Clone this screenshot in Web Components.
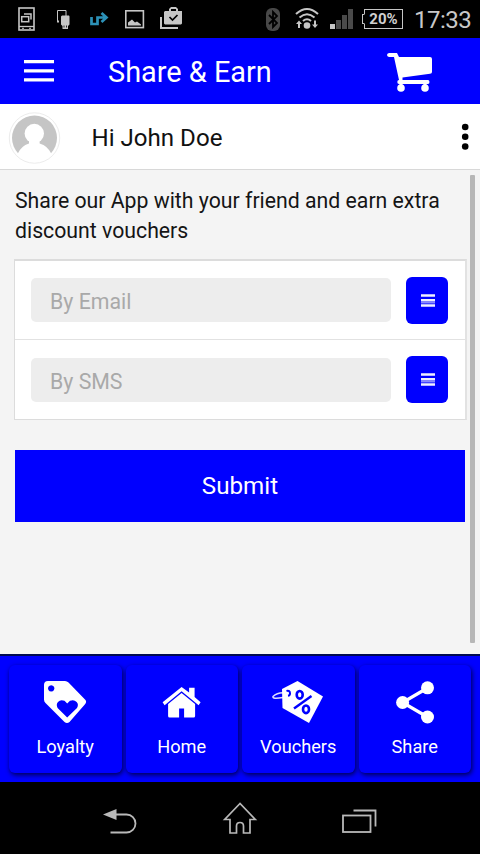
<!DOCTYPE html>
<html lang="en">
<head>
<meta charset="utf-8">
<title>Share &amp; Earn</title>
<style>
html,body{margin:0;padding:0;height:100%;overflow:hidden;background:#000}
body{font-family:Roboto,"Liberation Sans",sans-serif}
</style>
</head>
<body>
<share-app></share-app>
<script>
const define = (tag, html) => customElements.define(tag, class extends HTMLElement {
  constructor() {
    super();
    const t = document.createElement('template');
    t.innerHTML = html;
    this.attachShadow({ mode: 'open' }).append(t.content.cloneNode(true));
  }
});

// Each icon: [width, height, svg content]
const ICONS = {
  cast: [18, 24, '<g fill="none" stroke="#c6c6c6"><rect x="1" y="1" width="15" height="22" stroke-width="1.6"/><path d="M1 19.500h15" stroke-width="1.300"/><path d="M4 21.300h2M11 21.300h2"/><rect x="3.700" y="9.700" width="7" height="5" stroke-width="1.500"/><path d="M6 7h7v5.500" stroke-width="1.500"/></g>'],
  usb: [13, 20, '<path d="M.5 12V.5H9V6" fill="none" stroke="#c6c6c6" stroke-width="1"/><path d="M0 10.500h2v2H0zM5 5.500h7l.5 1v8l-1.500 1.500v3H5.500v-3L4 14.500v-8z" fill="#c6c6c6"/><path d="M7 15.500v2M9.500 15.500v2" stroke="#000" stroke-width=".8"/>'],
  route: [19, 15, '<path d="M1.500 5v7h6V5.500h9M11.500 1l5 4.500-5 4.500" fill="none" stroke="#2c91b7" stroke-width="2.700"/>'],
  image: [20, 19, '<rect x=".8" y=".8" width="17.600" height="16.800" fill="none" stroke="#c6c6c6" stroke-width="1.600"/><path d="M3 15.500v-3l4-3 3 3 2-1 4 3v1z" fill="#c6c6c6"/>'],
  work: [23, 23, '<path d="M1 10v11h17" fill="none" stroke="#c6c6c6" stroke-width="2"/><path fill="#c6c6c6" fill-rule="evenodd" d="M5 4h4V2l2-2h5l2 2v2h4v12.500l-1 1H5l-1-1V5zM11 2v2h5V2z"/><path d="M9.500 10l3 3 5-5" fill="none" stroke="#000" stroke-width="1.700"/>'],
  bluetooth: [14, 23, '<rect width="14" height="23" rx="6" fill="#484848"/><path d="M3 7l8 8-4 4V4l4 4-8 8" fill="none" stroke="#000" stroke-width="1.800"/>'],
  wifi: [24, 22, '<g fill="none" stroke="#c6c6c6" stroke-width="2"><path d="M1 6q11-10 22 0M4.500 9.500q7.500-6.500 15 0M8 13q4-3.500 8 0"/></g><circle cx="12" cy="17.500" r="3.300" fill="#c6c6c6"/><path fill="#c6c6c6" d="M4 12.500l3 3.500H5v4H3v-4H1zM20 20l3-3.500h-2v-4h-2v4h-2z"/>'],
  signal: [24, 21, '<path fill="#c6c6c6" d="M0 15h5v5H0z"/><path fill="#4a4a4a" d="M6 11h5v9H6zM12 6h5v14h-5zM18 0h5v20h-5z"/>'],
  menu: [30, 22, '<path d="M0 1.700h30M0 10.800h30M0 19.900h30" stroke="#fff" stroke-width="3.200"/>'],
  cart: [46, 40, '<g fill="#fff"><path d="M2 0h8l2 4h31q2 0 2 2v13q0 1.500-2 1.800L15.500 24.500V27H41q1.500 0 1.500 2T41 31H12q-1.700 0-1.700-2t1.700-2L7 4H2Q0 3.700 0 2t2-2z"/><circle cx="14" cy="35" r="3.800"/><circle cx="38" cy="35" r="3.800"/><path d="M12.500 29h3v4h-3zM36.500 29h3v4h-3z"/></g>'],
  avatar: [52, 52, '<circle cx="26.500" cy="26" r="25.200" fill="#fff" stroke="#ececec"/><circle cx="26.500" cy="26" r="22.500" fill="#c5c5c5"/><clipPath id="c"><circle cx="26.500" cy="26" r="24.200"/></clipPath><g clip-path="url(#c)" fill="#fff"><circle cx="26.300" cy="21.500" r="9.700"/><rect x="21" y="27" width="10.600" height="8"/><path d="M6.500 52L9.500 42Q13 34 21 31.500h10.600Q40 34 43.500 42l3 10z"/></g>'],
  dots: [8, 28, '<circle cx="4.200" cy="4" r="3.300"/><circle cx="4.200" cy="13.800" r="3.300"/><circle cx="4.200" cy="23.500" r="3.300"/>'],
  bars: [14, 13, '<path d="M0 8.400h14" stroke="#88f" stroke-width="2.200"/><path d="M0 1.500h14M0 6.200h14M0 11.500h14" stroke="#f0f0ff" stroke-width="2.300"/>'],
  loyalty: [42, 43, '<path fill="#fff" fill-rule="evenodd" d="M4 0h17q2 0 3.500 1.500L41 18.500q2.200 2.200 0 4.700L25.500 41q-2.500 2.200-5 0L1.500 22Q0 20.500 0 18.500V4Q0 0 4 0zM7.200 4.200a3.200 3.200 0 1 0 .01 0zM23.200 36.500L33 27Q35 23.500 32.600 21 30 18 26 19.800L23.200 22.500 20.500 19.800Q16.500 18 14 21 11.800 23.500 13.600 27z"/>'],
  home: [38, 31, '<g fill="#fff" transform="translate(-.4 0)"><path d="M19 0l7.500 5.500V.8H32V10l6 5.300-2 3L19 4.300 2 18.300l-2-3z"/><path d="M19 6l13.500 11v12q0 1.500-1.500 1.500h-9.500v-9h-5v9H7q-1.500 0-1.500-1.500V17z"/></g>'],
  voucher: [52, 43, '<path d="M12 11.800Q5 11.500 1 15.500q-1 3 10 1" fill="none" stroke="#dcdcff" stroke-width="1.500"/><path fill="#fff" d="M10 8L25.500 0 51 15.500 37 42 10.500 27z"/><path d="M14.500 10q3.500-1 3.500 2.500 0 2-2 2.300" fill="none" stroke="#00f" stroke-width="2"/><g fill="none" stroke="#00f"><ellipse cx="27.700" cy="13.800" rx="3" ry="3.800" stroke-width="2.600"/><ellipse cx="34" cy="28.300" rx="3" ry="3.800" stroke-width="2.600"/><path d="M39.500 15L22 27.500" stroke-width="2.400"/></g>'],
  share: [38, 43, '<path d="M31.500 7L6.500 21.500l25 14.500" fill="none" stroke="#fff" stroke-width="3.200"/><g fill="#fff"><circle cx="31.500" cy="6.800" r="6.500"/><circle cx="6.600" cy="21.500" r="6.500"/><circle cx="31.500" cy="36" r="6.500"/></g>'],
  back: [35, 26, '<path fill="#b9b9b9" d="M0 6.500L13.500 1v11z"/><path d="M12 6.500h11.500a9 9 0 0 1 0 18H7.500" fill="none" stroke="#b9b9b9" stroke-width="1.800"/>'],
  sysHome: [34, 33, '<path d="M17 2.500L1.700 18.500H7V32h6.500v-7q0-3.500 3.500-3.500t3.500 3.500v7H27V18.500h5.300z" fill="none" stroke="#b9b9b9" stroke-width="1.700"/>'],
  recent: [35, 25, '<g fill="none" stroke="#b9b9b9" stroke-width="1.800"><rect x="1" y="7.500" width="27.500" height="16.500"/><path d="M11.500 2.500h22V18.500"/></g>']
};
customElements.define('ui-icon', class extends HTMLElement {
  connectedCallback() {
    if (this.shadowRoot) return;
    const [w, h, body] = ICONS[this.getAttribute('name')];
    this.attachShadow({ mode: 'open' }).innerHTML =
      `<style>:host{display:block;flex:none;width:${w}px;height:${h}px}svg{display:block;overflow:visible}</style>
       <svg width="${w}" height="${h}" viewBox="0 0 ${w} ${h}">${body}</svg>`;
  }
});

define('battery-level', `<style>
:host{display:block;flex:none;width:41px;height:20px}
div{box-sizing:border-box;height:20px;margin-left:2px;border:1px solid #c6c6c6;color:#d0d0d0;font:bold 15px/19px Roboto,sans-serif;text-align:center;position:relative}
i{position:absolute;left:-3px;top:4px;width:3px;height:10px;box-sizing:border-box;border:1px solid #c6c6c6;border-right:1px solid #000}
</style><div><i></i><slot></slot></div>`);

define('status-bar', `<style>
:host{display:flex;justify-content:space-between;height:38px;background:#000;padding:0 8px 0 18px;box-sizing:border-box}
div{display:flex;align-items:flex-start}
.l ui-icon:nth-child(1){margin:7px 21px 0 0}.l ui-icon:nth-child(2){margin:10px 20px 0 0}.l ui-icon:nth-child(3){margin:12px 16px 0 0}.l ui-icon:nth-child(4){margin:10px 15px 0 0}.l ui-icon:nth-child(5){margin-top:7px}
.r{gap:11px}.r>*{margin-top:9px}.r ui-icon:first-child{margin:8px 4px 0 0}.r ui-icon:nth-child(2){margin-top:8px}
.r battery-level{margin-left:-3px}
span{font-size:24px;line-height:24px;color:#c8c8c8;margin:8px 0 0!important;width:58px;letter-spacing:-.5px;white-space:nowrap}
</style><div class="l"><ui-icon name="cast"></ui-icon><ui-icon name="usb"></ui-icon><ui-icon name="route"></ui-icon><ui-icon name="image"></ui-icon><ui-icon name="work"></ui-icon></div>
<div class="r"><ui-icon name="bluetooth"></ui-icon><ui-icon name="wifi"></ui-icon><ui-icon name="signal"></ui-icon><battery-level>20%</battery-level><span>17:33</span></div>`);

define('app-header', `<style>
:host{display:flex;align-items:flex-start;height:66px;background:#00f;color:#fff;padding:0 47px 0 24px;box-sizing:border-box}
ui-icon{margin-top:22px}h1{flex:1;font-weight:400;font-size:28.9px;line-height:34px;margin:17px 0 0 54px}
ui-icon:last-child{margin-top:14.500px}
</style><ui-icon name="menu"></ui-icon><h1><slot></slot></h1><ui-icon name="cart"></ui-icon>`);

define('user-bar', `<style>
:host{display:flex;align-items:flex-start;height:66px;background:#fff;border-bottom:1px solid #d8d8d8;box-sizing:border-box;padding:0 11px 0 8px;color:#111}
ui-icon{margin-top:8.400px}span{flex:1;font-size:24.1px;line-height:30px;margin:19px 0 0 31.500px}
ui-icon:last-child{margin-top:18.500px}
</style><ui-icon name="avatar"></ui-icon><span><slot></slot></span><ui-icon name="dots"></ui-icon>`);

define('contact-row', `<style>
:host{display:flex;align-items:center;height:79px;padding:0 17px 0 16px;box-sizing:border-box;gap:15px}
.f{flex:1;height:44px;border-radius:5px;background:#ededed;color:#a9a9a9;font-size:21.3px;line-height:47px;padding-left:19px;box-sizing:border-box}
.b{width:42px;height:47px;border-radius:6px;background:#00f;display:grid;place-items:center;padding-left:1px;box-sizing:border-box}
</style><div class="f"><slot></slot></div><div class="b"><ui-icon name="bars"></ui-icon></div>`);

define('contact-card', `<style>
:host{display:block;width:453px;height:161px;box-sizing:border-box;background:#fff;border:1px solid #dcdcdc;border-top-width:2px;border-right:2px solid #e2e2e2}
::slotted(contact-row:first-child){border-bottom:1px solid #e2e2e2}
</style><slot></slot>`);

define('submit-button', `<style>
:host{display:block;width:450px;height:71.500px;background:#00f;color:#fff;font-size:24.2px;line-height:73px;text-align:center}
</style><slot></slot>`);

define('app-content', `<style>
:host{display:flex;justify-content:space-between;height:484px;background:#f4f4f4;padding:0 5px 0 14px;box-sizing:border-box}
p{margin:16px 0 13px 1px;font-size:21.25px;line-height:30px;color:#151515;white-space:nowrap}
contact-card{margin-bottom:30.300px}submit-button{margin-left:1px}
.s{width:5px;height:468px;margin-top:5px;background:#b7b7b7;border-radius:1px}
</style><div><p>Share our App with your friend and earn extra<br>discount vouchers</p>
<contact-card><contact-row>By Email</contact-row><contact-row>By SMS</contact-row></contact-card>
<submit-button>Submit</submit-button></div><div class="s"></div>`);

define('nav-tile', `<style>
:host{display:flex;flex-direction:column;align-items:center;justify-content:space-between;height:108px;box-sizing:border-box;padding:15px 0 15px;background:#00f;border-radius:6px;box-shadow:1px 2px 5px rgba(0,0,45,.85)}
.i{height:45px;display:grid;place-items:center}
.t{font-size:18.2px;line-height:22px;color:#fff;white-space:nowrap}
</style><div class="i"><slot name="icon"></slot></div><div class="t"><slot></slot></div>`);

define('tab-bar', `<style>
:host{display:grid;grid-template-columns:repeat(4,1fr);gap:4px;height:128px;box-sizing:border-box;background:#00f;border-top:2px solid #000b50;padding:9px 9px 0 9px}
</style>
<nav-tile><ui-icon slot="icon" name="loyalty"></ui-icon>Loyalty</nav-tile>
<nav-tile><ui-icon slot="icon" name="home"></ui-icon>Home</nav-tile>
<nav-tile><ui-icon slot="icon" name="voucher"></ui-icon>Vouchers</nav-tile>
<nav-tile><ui-icon slot="icon" name="share"></ui-icon>Share</nav-tile>`);

define('system-bar', `<style>
:host{display:flex;height:72px;background:#000;padding:0 103px 0 103px;box-sizing:border-box;justify-content:space-between}
ui-icon[name=back]{margin-top:26px}ui-icon[name=sysHome]{margin-top:19px}ui-icon[name=recent]{margin-top:26px}
</style><ui-icon name="back"></ui-icon><ui-icon name="sysHome"></ui-icon><ui-icon name="recent"></ui-icon>`);

define('share-app', `<style>:host{display:flex;flex-direction:column;width:480px;height:854px}
status-bar,app-header,user-bar,app-content,tab-bar,system-bar{flex:none}</style>
<status-bar></status-bar><app-header>Share &amp; Earn</app-header><user-bar>Hi John Doe</user-bar>
<app-content></app-content><tab-bar></tab-bar><system-bar></system-bar>`);
</script>
</body>
</html>
